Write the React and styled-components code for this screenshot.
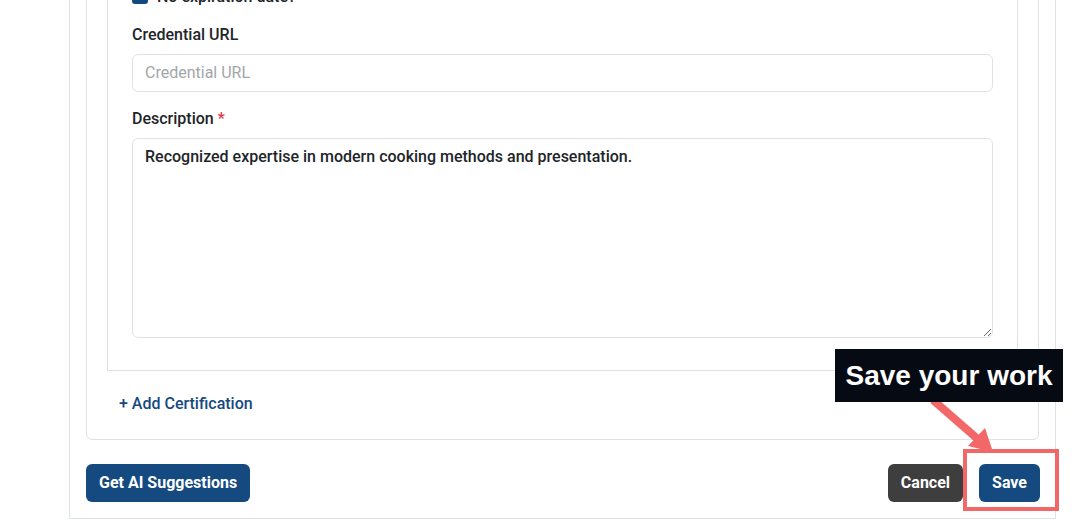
import React from "react";
import styled, { createGlobalStyle } from "styled-components";

const blue = "#154a80";
const line = "#dfe2e6";
const ink = "#212529";

const GlobalStyle = createGlobalStyle`
  html, body { margin: 0; padding: 0; background: #fff; }
  body { font-family: Roboto, "Noto Sans", sans-serif; color: ${ink}; overflow: hidden; }
  * { box-sizing: border-box; }
`;

const Page = styled.div`
  position: relative;
  width: 1084px;
  height: 520px;
  overflow: hidden;
`;

const Outer = styled.div`
  margin: -62px 0 0 69px;
  width: 987px;
  border-left: 1px solid ${line};
  border-right: 1px solid ${line};
  border-bottom: 1px solid ${line};
  padding: 0 16px 16px;
`;

const Card = styled.section`
  border: 1px solid ${line};
  border-radius: 6px;
  padding: 20px 20px 15px;
`;

const Item = styled.div`
  border: 1px solid ${line};
  padding: 24px 24px 32px;
  display: flex;
  flex-direction: column;
`;

const CheckRow = styled.label`
  display: flex;
  align-items: center;
  gap: 9px;
  height: 24px;
  font-size: 16px;
  font-weight: 500;
  margin-bottom: 15px;
`;

const Check = styled.span`
  width: 16px;
  height: 16px;
  border-radius: 3px;
  background: ${blue};
`;

const Field = styled.div`
  display: flex;
  flex-direction: column;
  gap: 7px;
  & + & { margin-top: 15px; }
`;

const Label = styled.label`
  font-size: 16px;
  font-weight: 500;
  line-height: 24px;
`;

const Req = styled.span`
  color: #dc3545;
  margin-left: 4px;
`;

const TextInput = styled.input`
  height: 38px;
  width: 100%;
  border: 1px solid ${line};
  border-radius: 6px;
  padding: 5px 12px 7px;
  font: 400 16px/24px Roboto, sans-serif;
  color: ${ink};
  outline: none;
  &::placeholder { color: #a3a6aa; }
`;

const TextArea = styled.textarea`
  height: 200px;
  width: 100%;
  border: 1px solid ${line};
  border-radius: 6px;
  padding: 6px 12px;
  font: 500 16px/24px Roboto, sans-serif;
  color: ${ink};
  outline: none;
  resize: vertical;
  display: block;
`;

const AddLink = styled.button`
  align-self: flex-start;
  margin-top: 13px;
  padding: 8px 12px;
  border: none;
  background: none;
  font: 500 16px/24px Roboto, sans-serif;
  color: ${blue};
  cursor: pointer;
`;

const Footer = styled.div`
  margin: 24px -1px 0 0;
  display: flex;
  justify-content: space-between;
  align-items: center;
`;

const Group = styled.div`
  display: flex;
  gap: 16px;
`;

const Button = styled.button`
  height: 38px;
  padding: 0 13px;
  border: none;
  border-radius: 6px;
  background: ${(p) => (p.$dark ? "#3e3e3e" : blue)};
  color: #fff;
  font: 700 16px/24px Roboto, sans-serif;
  cursor: pointer;
`;

const Highlight = styled.div`
  position: absolute;
  left: 963px;
  top: 449px;
  width: 96px;
  height: 62px;
  border: 4px solid #f26868;
  pointer-events: none;
`;

const Tip = styled.div`
  position: absolute;
  left: 835px;
  top: 349px;
  width: 228px;
  height: 53px;
  background: #060b13;
  color: #fff;
  display: flex;
  align-items: center;
  justify-content: center;
  font: 700 28px "Liberation Sans", Arial, sans-serif;
`;

const Arrow = styled.svg`
  position: absolute;
  left: 0;
  top: 0;
  pointer-events: none;
`;

export default function App() {
  return (
    <Page>
      <GlobalStyle />
      <Outer>
        <Card>
          <Item>
            <CheckRow>
              <Check />
              No expiration date?
            </CheckRow>
            <Field>
              <Label>Credential URL</Label>
              <TextInput placeholder="Credential URL" />
            </Field>
            <Field>
              <Label>
                Description<Req>*</Req>
              </Label>
              <TextArea defaultValue="Recognized expertise in modern cooking methods and presentation." />
            </Field>
          </Item>
          <AddLink>+ Add Certification</AddLink>
        </Card>
        <Footer>
          <Button>Get AI Suggestions</Button>
          <Group>
            <Button $dark>Cancel</Button>
            <Button>Save</Button>
          </Group>
        </Footer>
      </Outer>
      <Arrow width="1084" height="520">
        <line x1="933" y1="400" x2="980" y2="441" stroke="#f26868" strokeWidth="8" />
        <polygon points="993,452 968,446 985,428" fill="#f26868" />
      </Arrow>
      <Highlight />
      <Tip>Save your work</Tip>
    </Page>
  );
}
